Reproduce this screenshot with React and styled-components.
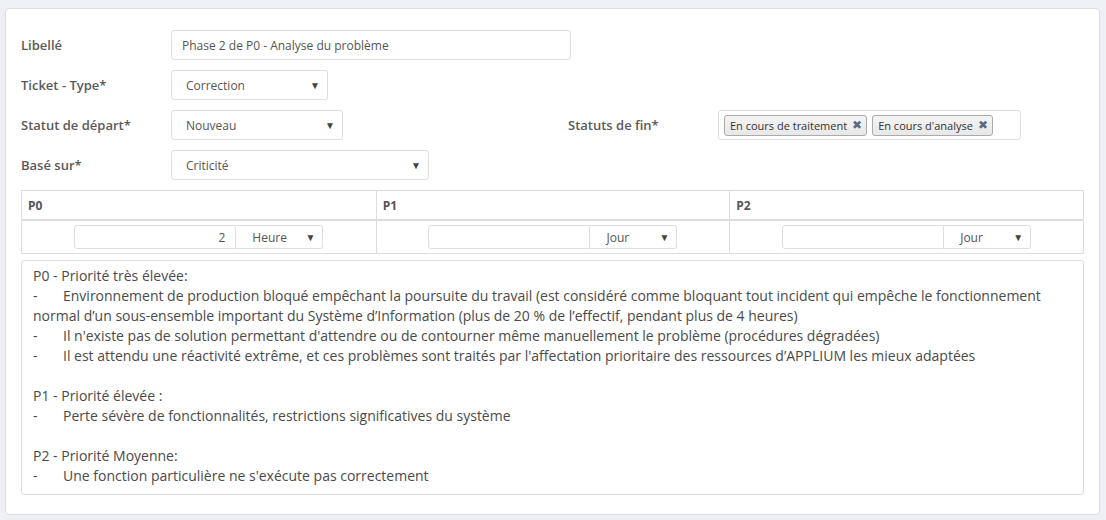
import React from "react";
import styled, { createGlobalStyle } from "styled-components";

const GlobalStyle = createGlobalStyle`
  html, body {
    margin: 0;
    padding: 0;
    background: #eff0f6;
    font-family: "Open Sans", "Liberation Sans", sans-serif;
  }
`;

const Page = styled.div`
  padding: 8px 6px 6px 5px;
`;

const Card = styled.div`
  background: #fff;
  border: 1px solid #dcdde2;
  border-radius: 4px;
  padding: 21px 15px 19px 15px;
  display: flex;
  flex-direction: column;
`;

const Form = styled.div`
  display: flex;
  flex-direction: column;
  gap: 10px;
`;

const Row = styled.div`
  display: flex;
  align-items: center;
  height: 30px;
`;

const Group = styled.div`
  display: flex;
  align-items: center;
  width: ${(p) => p.width || "auto"};
`;

const Label = styled.label`
  width: 150px;
  flex-shrink: 0;
  font-size: 13px;
  font-weight: 600;
  color: #5a5a5a;
`;

const TextInput = styled.div`
  box-sizing: border-box;
  width: ${(p) => p.width}px;
  height: ${(p) => p.h || 30}px;
  border: 1px solid #dedede;
  border-radius: 3px;
  padding: 0 10px;
  display: flex;
  align-items: center;
  justify-content: ${(p) => (p.right ? "flex-end" : "flex-start")};
  font-size: 12px;
  color: #555;
`;

const Select = styled.div`
  box-sizing: border-box;
  width: ${(p) => p.width}px;
  height: ${(p) => p.h || 30}px;
  border: 1px solid #dedede;
  border-radius: 3px;
  padding: 0 7px 0 ${(p) => p.pl || 14}px;
  display: flex;
  align-items: center;
  justify-content: space-between;
  font-size: 12px;
  color: #555;
  background: #fff;
`;

const Arrow = styled.span`
  font-size: 10px;
  color: #444;
`;

const TagBox = styled.div`
  box-sizing: border-box;
  width: 303px;
  height: 30px;
  border: 1px solid #dedede;
  border-radius: 3px;
  padding: 0 5px;
  display: flex;
  align-items: center;
  gap: 5px;
`;

const Tag = styled.span`
  display: inline-flex;
  align-items: center;
  gap: 5px;
  height: 21px;
  box-sizing: border-box;
  padding: 0 4px 0 5px;
  border: 1px solid #aaa;
  border-radius: 3px;
  background: linear-gradient(#f4f4f4, #e8e8e8);
  font-size: 11px;
  color: #333;
`;

const TagX = styled.span`
  font-size: 12px;
  color: #5b6a83;
  line-height: 1;
`;

const Table = styled.div`
  margin-top: 10px;
  border: 1px solid #ddd;
  display: grid;
  grid-template-columns: 1fr 1fr 1fr;
`;

const HeadCell = styled.div`
  height: 28px;
  display: flex;
  align-items: center;
  padding-left: 6px;
  font-size: 12px;
  font-weight: 700;
  color: #555;
  border-bottom: 2px solid #ddd;
  border-left: ${(p) => (p.first ? "none" : "1px solid #ddd")};
`;

const BodyCell = styled.div`
  height: 32px;
  display: flex;
  align-items: center;
  justify-content: center;
  border-left: ${(p) => (p.first ? "none" : "1px solid #ddd")};
`;

const Combo = styled.div`
  display: flex;
  & > div:first-child {
    border-radius: 3px 0 0 3px;
  }
  & > div:last-child {
    border-left: none;
    border-radius: 0 3px 3px 0;
  }
`;

const Notes = styled.div`
  margin-top: 6px;
  border: 1px solid #ddd;
  border-radius: 3px;
  padding: 5px 11px 8px 11px;
  font-size: 14px;
  line-height: 20px;
  color: #4a4a4a;
`;

const Line = styled.div`
  min-height: 20px;
`;

const Dash = styled.span`
  display: inline-block;
  width: 30px;
`;

const bullets = (items) =>
  items.map((t, i) => (
    <Line key={i}>
      <Dash>-</Dash>
      {t}
    </Line>
  ));

const Cell = ({ first, value, unit }) => (
  <BodyCell first={first}>
    <Combo>
      <TextInput width={162} h={24} right>
        {value}
      </TextInput>
      <Select width={87} h={24} pl={16}>
        {unit}
        <Arrow>▼</Arrow>
      </Select>
    </Combo>
  </BodyCell>
);

export default function App() {
  return (
    <>
      <GlobalStyle />
      <Page>
        <Card>
          <Form>
            <Row>
              <Label>Libellé</Label>
              <TextInput width={400}>Phase 2 de P0 - Analyse du problème</TextInput>
            </Row>
            <Row>
              <Label>Ticket - Type*</Label>
              <Select width={157}>
                Correction
                <Arrow>▼</Arrow>
              </Select>
            </Row>
            <Row>
              <Group width="547px">
                <Label>Statut de départ*</Label>
                <Select width={172}>
                  Nouveau
                  <Arrow>▼</Arrow>
                </Select>
              </Group>
              <Group>
                <Label>Statuts de fin*</Label>
                <TagBox>
                  <Tag>
                    En cours de traitement <TagX>✖</TagX>
                  </Tag>
                  <Tag>
                    En cours d'analyse <TagX>✖</TagX>
                  </Tag>
                </TagBox>
              </Group>
            </Row>
            <Row>
              <Label>Basé sur*</Label>
              <Select width={258}>
                Criticité
                <Arrow>▼</Arrow>
              </Select>
            </Row>
          </Form>

          <Table>
            <HeadCell first>P0</HeadCell>
            <HeadCell>P1</HeadCell>
            <HeadCell>P2</HeadCell>
            <Cell first value="2" unit="Heure" />
            <Cell value="" unit="Jour" />
            <Cell value="" unit="Jour" />
          </Table>

          <Notes>
            <Line>P0 - Priorité très élevée:</Line>
            {bullets([
              "Environnement de production bloqué empêchant la poursuite du travail (est considéré comme bloquant tout incident qui empêche le fonctionnement normal d’un sous-ensemble important du Système d’Information (plus de 20 % de l’effectif, pendant plus de 4 heures)",
              "Il n'existe pas de solution permettant d'attendre ou de contourner même manuellement le problème (procédures dégradées)",
              "Il est attendu une réactivité extrême, et ces problèmes sont traités par l'affectation prioritaire des ressources d’APPLIUM les mieux adaptées",
            ])}
            <Line />
            <Line>P1 - Priorité élevée :</Line>
            {bullets(["Perte sévère de fonctionnalités, restrictions significatives du système"])}
            <Line />
            <Line>P2 - Priorité Moyenne:</Line>
            {bullets(["Une fonction particulière ne s'exécute pas correctement"])}
          </Notes>
        </Card>
      </Page>
    </>
  );
}
